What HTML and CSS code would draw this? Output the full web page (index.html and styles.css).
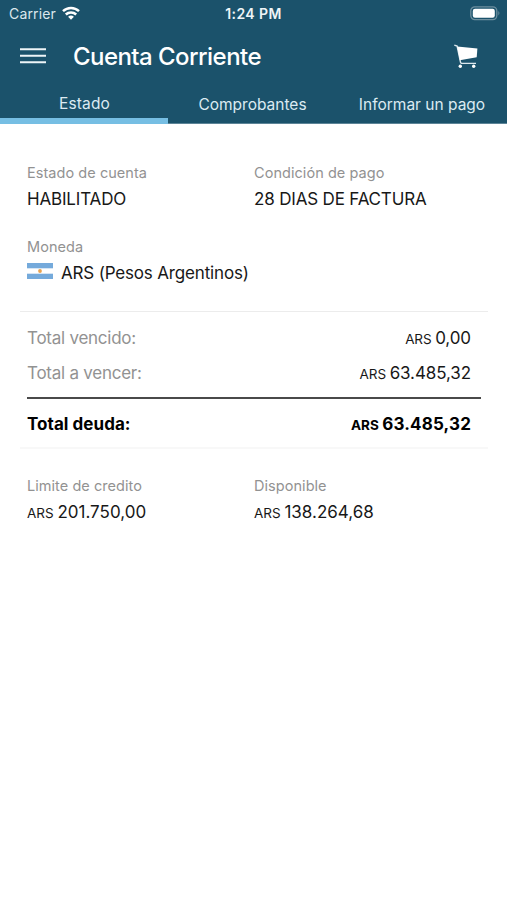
FILE: index.html
```html
<!DOCTYPE html>
<html lang="es">
<head>
<meta charset="utf-8">
<title>Cuenta Corriente</title>
<link rel="stylesheet" href="styles.css">
</head>
<body>
<header class="header">
  <div class="status">
    <div class="carrier"><span>Carrier</span>
      <svg class="wifi" viewBox="0 0 18 14" width="18" height="14" fill="none" stroke="#fff" stroke-width="2.5"><path d="M1 5.1a11.7 11.7 0 0 1 16 0"/><path d="M3.8 8.5a7.6 7.6 0 0 1 10.4 0"/><path d="M9 13.7 6.1 10.8a4.2 4.2 0 0 1 5.8 0z" fill="#fff" stroke="none"/></svg>
    </div>
    <span class="time">1:24 PM</span>
    <svg class="battery" viewBox="0 0 31 15" width="31" height="15"><rect x=".8" y=".8" width="26" height="12.8" rx="4" fill="none" stroke="#6e8f9f" stroke-width="1.3"/><rect x="2.8" y="2.7" width="22" height="9" rx="2.2" fill="#fff"/><path d="M28.4 5q2 2.2 0 4.4z" fill="#6e8f9f"/></svg>
  </div>
  <div class="bar">
    <svg class="menu" viewBox="0 0 26 16" width="26" height="16" stroke="#eef5f8" stroke-width="2"><path d="M0 1.3h26M0 7.8h26M0 14.3h26"/></svg>
    <h1 class="title">Cuenta Corriente</h1>
    <svg class="cart" viewBox="0 0 24 25" width="24" height="25"><path d="M.3 1.1 3.1 2 6.6 18.6 7.5 19.4H22" fill="none" stroke="#dce8ed" stroke-width="1.4"/><path d="M3.2 2.6 23.4 4.5 22.7 13.2 5.8 16.2z" fill="#fff"/><circle cx="6.3" cy="22.3" r="1.7" fill="#fff"/><circle cx="19.7" cy="22.3" r="1.7" fill="#fff"/></svg>
  </div>
  <nav class="tabs">
    <a class="tab active">Estado</a>
    <a class="tab">Comprobantes</a>
    <a class="tab">Informar un pago</a>
  </nav>
</header>
<main class="content">
  <section class="fields">
    <div class="field"><div class="label">Estado de cuenta</div><div class="value">HABILITADO</div></div>
    <div class="field"><div class="label">Condición de pago</div><div class="value">28 DIAS DE FACTURA</div></div>
    <div class="field"><div class="label">Moneda</div><div class="value currency">
      <svg class="flag" viewBox="0 0 26 16" width="26" height="16"><path fill="#75aadb" d="M0 0h26v16H0z"/><path fill="#fff" d="M0 5.3h26v5.4H0z"/><circle cx="13" cy="8" r="1.9" fill="#e9a34f"/></svg><span>ARS (Pesos Argentinos)</span></div></div>
  </section>
  <section class="totals">
    <div class="row"><span class="name">Total vencido:</span><span class="amount"><small>ARS</small> 0,00</span></div>
    <div class="row"><span class="name">Total a vencer:</span><span class="amount"><small>ARS</small> 63.485,32</span></div>
    <div class="row sum"><span class="name">Total deuda:</span><span class="amount"><small>ARS</small> 63.485,32</span></div>
  </section>
  <section class="fields credit">
    <div class="field"><div class="label">Limite de credito</div><div class="value amount"><small>ARS</small> 201.750,00</div></div>
    <div class="field"><div class="label">Disponible</div><div class="value amount"><small>ARS</small> 138.264,68</div></div>
  </section>
</main>
</body>
</html>
```
FILE: styles.css
```css
* { box-sizing: border-box; }
body { margin: 0; background: #fff; color: #181818; font-family: Inter, "Liberation Sans", sans-serif; }
svg { display: block; flex: none; }
.header { height: 124px; background: #1b526b; color: #fff; display: flex; flex-direction: column; }
.status { height: 28px; display: grid; grid-template-columns: 1fr auto 1fr; align-items: center; padding: 0 6px 0 9px; font-size: 14px; }
.carrier { display: flex; align-items: center; gap: 6px; color: #dbe7ed; letter-spacing: .15px; margin-top: -1px; }
.wifi { margin-top: -2px; }
.time { font-weight: 600; font-size: 14px; color: #eef4f7; letter-spacing: .4px; margin: -2px 3px 0 0; }
.battery { justify-self: end; margin-top: -1px; }
.bar { height: 56px; display: flex; align-items: center; padding: 0 29px 0 20px; }
.title { margin: 2px 0 0 27px; font-size: 24px; line-height: 30px; font-weight: 500; letter-spacing: -.55px; flex: 1; }
.tabs { height: 40px; display: grid; grid-template-columns: 168px 169px 1fr; }
.tab { display: flex; align-items: center; justify-content: center; padding-top: 2px; font-size: 15.5px; color: #dcebf2; border-bottom: 1px solid #5c8497; }
.tab.active { border-bottom: 6px solid #76bee3; padding: 4px 0 0 1px; letter-spacing: .15px; }
.content { padding: 38px 19px 0 20px; }
.fields { display: grid; grid-template-columns: 227px 1fr; row-gap: 24px; padding-left: 7px; }
.label { font-size: 14.5px; line-height: 22px; color: #929292; letter-spacing: .05px; }
.value { font-size: 17px; line-height: 26px; margin-top: 2px; white-space: nowrap; letter-spacing: -.17px; }
.currency { display: flex; align-items: center; gap: 8px; }
.flag { margin-top: -5px; }
.totals { margin-top: 25px; border-top: 1.5px solid #ececec; border-bottom: 2px solid #f8f8f8; padding: 8px 7px 0; }
.row { height: 35px; display: flex; align-items: center; justify-content: space-between; padding-right: 10px; font-size: 17px; }
.row .name { color: #929292; letter-spacing: -.25px; }
.row + .row:not(.sum) { padding-top: 1px; }
.amount { letter-spacing: -.1px; word-spacing: -1px; }
.amount small { font-size: 13.5px; }
.value.amount { letter-spacing: 0; word-spacing: -1px; }
.sum { height: 50px; margin-top: 7px; padding-top: 1px; border-top: 2px solid #4a4a4a; font-weight: 700; color: #000; }
.sum .name { color: #000; letter-spacing: .05px; }
.sum .amount { letter-spacing: .15px; }
.credit { margin-top: 26px; }
```
